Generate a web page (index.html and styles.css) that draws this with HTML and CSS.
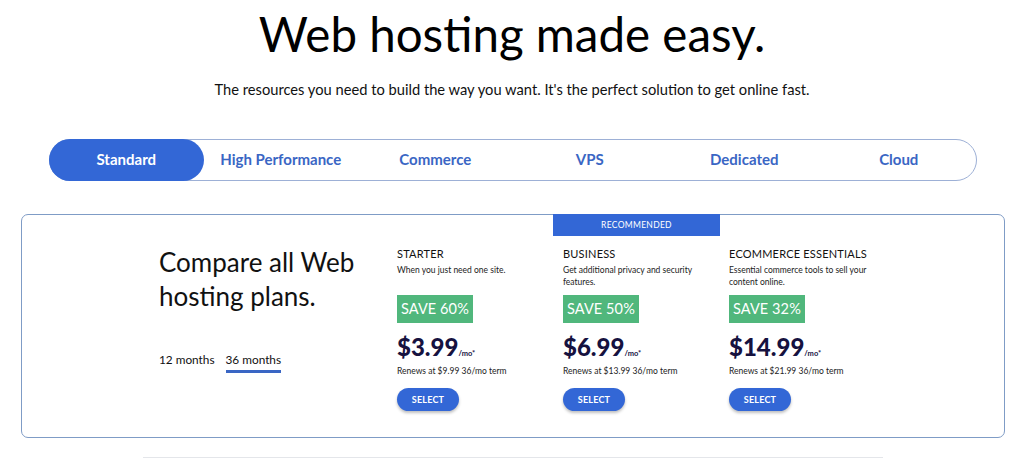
FILE: index.html
```html
<!DOCTYPE html>
<html lang="en">
<head>
<meta charset="utf-8">
<title>Web hosting made easy.</title>
<link rel="stylesheet" href="styles.css">
</head>
<body>
<header class="hero">
  <h1 class="hero-title">Web hosting made easy.</h1>
  <p class="hero-sub">The resources you need to build the way you want. It's the perfect solution to get online fast.</p>
</header>

<nav class="tabs">
  <a class="tab active">Standard</a>
  <a class="tab">High Performance</a>
  <a class="tab">Commerce</a>
  <a class="tab">VPS</a>
  <a class="tab">Dedicated</a>
  <a class="tab">Cloud</a>
</nav>

<section class="card">
  <div class="intro">
    <h2 class="intro-title">Compare all Web hosting plans.</h2>
    <div class="terms">
      <span class="term">12 months</span>
      <span class="term selected">36 months</span>
    </div>
  </div>

  <div class="plan">
    <h3 class="plan-name">STARTER</h3>
    <p class="plan-desc">When you just need one site.</p>
    <span class="save">SAVE 60%</span>
    <div class="price"><span class="amount">$3.99</span><span class="per">/mo*</span></div>
    <p class="renew">Renews at $9.99 36/mo term</p>
    <button class="select">SELECT</button>
  </div>

  <div class="plan recommended">
    <div class="banner">RECOMMENDED</div>
    <h3 class="plan-name">BUSINESS</h3>
    <p class="plan-desc">Get additional privacy and security features.</p>
    <span class="save">SAVE 50%</span>
    <div class="price"><span class="amount">$6.99</span><span class="per">/mo*</span></div>
    <p class="renew">Renews at $13.99 36/mo term</p>
    <button class="select">SELECT</button>
  </div>

  <div class="plan">
    <h3 class="plan-name">ECOMMERCE ESSENTIALS</h3>
    <p class="plan-desc">Essential commerce tools to sell your content online.</p>
    <span class="save">SAVE 32%</span>
    <div class="price"><span class="amount">$14.99</span><span class="per">/mo*</span></div>
    <p class="renew">Renews at $21.99 36/mo term</p>
    <button class="select">SELECT</button>
  </div>
</section>

<div class="divider"></div>
</body>
</html>
```

FILE: styles.css
```css
* { box-sizing: border-box; }

body {
  margin: 0;
  background: #ffffff;
  font-family: "Lato", "Open Sans", sans-serif;
  color: #111111;
  overflow: hidden;
}

.hero {
  text-align: center;
}

.hero-title {
  margin: 0;
  padding-top: 4px;
  font-size: 47.5px;
  font-weight: 400;
  line-height: 60px;
  letter-spacing: 0;
  color: #000;
}

.hero-sub {
  margin: 16px 0 0;
  font-size: 14.7px;
  line-height: 18px;
  color: #111;
}

.tabs {
  display: flex;
  margin: 41px 47px 0 49px;
  height: 42px;
  border: 1px solid #9db0d6;
  border-radius: 21px;
}

.tab {
  flex: 1;
  display: flex;
  align-items: center;
  justify-content: center;
  padding-bottom: 2px;
  font-size: 15px;
  font-weight: 700;
  color: #3a66c4;
  border-radius: 21px;
}

.tab.active {
  background: #3367d6;
  color: #ffffff;
  margin: -1px 0 -1px -1px;
}

.card {
  display: flex;
  margin: 33px 19px 0 21px;
  height: 224px;
  border: 1px solid #7f9cc6;
  border-radius: 7px;
  padding-left: 137px;
}

.intro {
  width: 230px;
  padding-top: 30px;
}

.intro-title {
  margin: 0;
  font-size: 26px;
  font-weight: 400;
  line-height: 34px;
  color: #111;
  width: 210px;
}

.terms {
  display: flex;
  gap: 11px;
  margin-top: 39px;
}

.term {
  font-size: 11.8px;
  line-height: 16px;
  color: #111;
  padding-bottom: 2px;
}

.term.selected {
  border-bottom: 3px solid #3a66c4;
}

.plan {
  width: 166px;
  padding: 32px 8px 0;
  position: relative;
}

.banner {
  position: absolute;
  top: -1px;
  left: -2px;
  right: 1px;
  height: 22px;
  background: #3367d6;
  color: #ffffff;
  font-size: 8.5px;
  letter-spacing: 0.3px;
  display: flex;
  align-items: center;
  justify-content: center;
}

.plan-name {
  margin: 0;
  font-size: 11px;
  font-weight: 400;
  line-height: 14px;
  letter-spacing: 0.2px;
  color: #111;
}

.plan-desc {
  margin: 3px 0 0;
  font-size: 8.5px;
  line-height: 12px;
  height: 24px;
  color: #222;
}

.save {
  display: inline-block;
  margin-top: 7px;
  padding: 0 4px;
  height: 28px;
  line-height: 28px;
  background: #50b77c;
  color: #ffffff;
  font-size: 14.5px;
  letter-spacing: 0.1px;
}

.price {
  margin-top: 10px;
  display: flex;
  align-items: baseline;
  color: #16123f;
}

.amount {
  font-size: 24px;
  font-weight: 900;
  line-height: 28px;
}

.per {
  font-size: 7.5px;
  font-weight: 700;
  margin-left: 0;
}

.renew {
  margin: 4px 0 0;
  font-size: 8.5px;
  line-height: 12px;
  color: #222;
}

.select {
  margin-top: 11px;
  width: 62px;
  height: 23px;
  border: none;
  border-radius: 12px;
  background: #3367d6;
  color: #ffffff;
  font-family: inherit;
  font-size: 9px;
  font-weight: 700;
  letter-spacing: 0.2px;
  box-shadow: 0 2px 3px rgba(0, 0, 0, 0.25);
  padding: 0;
}

.divider {
  margin: 19px 141px 0 143px;
  height: 1px;
  background: #e4e6ea;
}
```
